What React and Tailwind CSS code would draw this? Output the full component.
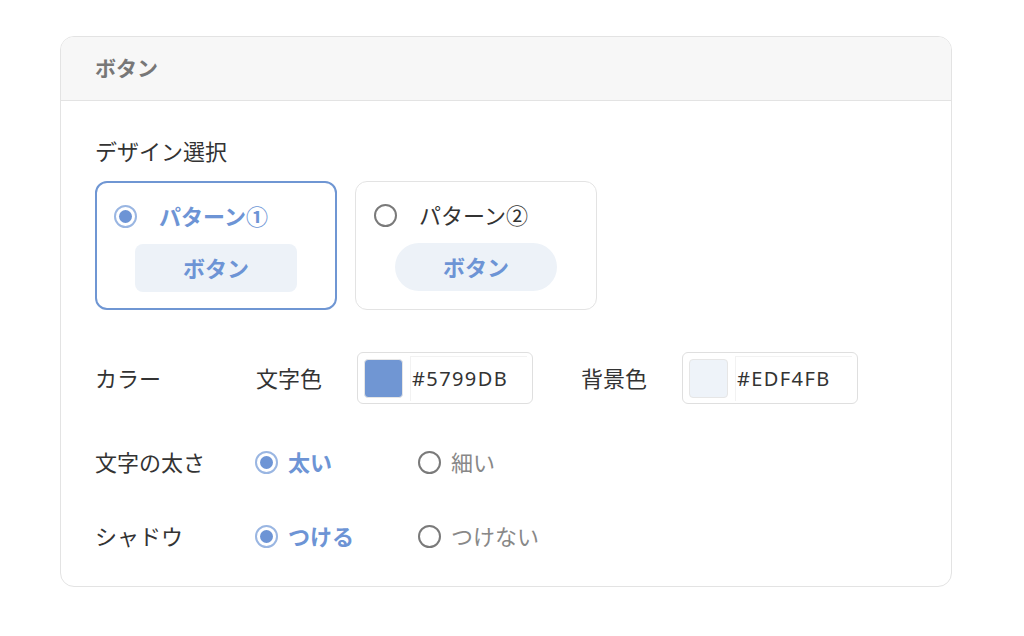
import React, { useState } from 'react';

const font = { fontFamily: '"Noto Sans", "Noto Sans CJK JP", sans-serif' };

function Radio({ checked }) {
  if (checked) {
    return (
      <span className="flex h-[23px] w-[23px] shrink-0 items-center justify-center rounded-full border-2 border-[#9ab6e2] bg-white">
        <span className="h-[13px] w-[13px] rounded-full bg-[#6d94d5]" />
      </span>
    );
  }
  return <span className="h-[23px] w-[23px] shrink-0 rounded-full border-2 border-[#7a7a7a] bg-white" />;
}

function PatternCard({ label, checked, pill, onClick }) {
  return (
    <button
      onClick={onClick}
      className={`flex h-[129px] w-[242px] flex-col rounded-[12px] bg-white pt-[21px] text-left ${
        checked ? 'border-2 border-[#6f96d3] px-[17px]' : 'border border-[#e3e3e3] px-[18px]'
      }`}
    >
      <div className="flex h-[24px] items-center gap-[22px]">
        <Radio checked={checked} />
        <span className={`text-[22px] leading-none ${checked ? 'font-bold text-[#6d94d5]' : 'text-[#333]'}`}>{label}</span>
      </div>
      <div
        className={`mx-auto mt-[16px] flex h-[48px] w-[162px] items-center justify-center bg-[#edf2f8] text-[22px] font-bold text-[#6d94d5] ${
          pill ? 'rounded-full' : 'rounded-[8px]'
        }`}
      >
        ボタン
      </div>
    </button>
  );
}

function ColorInput({ color, value }) {
  return (
    <div className="flex h-[52px] w-[176px] items-center rounded-[6px] border border-[#dfdfdf] bg-white pl-[6px] pr-[5px]">
      <span className="h-[39px] w-[39px] shrink-0 rounded-[4px] border border-[#e6e6e6]" style={{ backgroundColor: color }} />
      <span className="ml-[7px] flex h-[45px] flex-1 items-center border-l border-t border-[#f2f2f2] pl-[1px] text-[20px] tracking-[1.4px] text-[#333]">
        {value}
      </span>
    </div>
  );
}

function OptionRow({ label, options, value, onChange }) {
  return (
    <div className="flex h-[32px] items-center">
      <span className="w-[160px] text-[22px] text-[#333]">{label}</span>
      {options.map((o) => {
        const on = o === value;
        return (
          <button key={o} onClick={() => onChange(o)} className="flex w-[163px] items-center gap-[10px]">
            <Radio checked={on} />
            <span className={`text-[22px] ${on ? 'font-bold text-[#6d94d5]' : 'text-[#888]'}`}>{o}</span>
          </button>
        );
      })}
    </div>
  );
}

export default function App() {
  const [pattern, setPattern] = useState(1);
  const [weight, setWeight] = useState('太い');
  const [shadow, setShadow] = useState('つける');

  return (
    <div className="min-h-[636px] w-full bg-white pl-[60px] pt-[36px]" style={font}>
      <div className="w-[892px] overflow-hidden rounded-[14px] border border-[#e3e3e3] bg-white">
        <div className="flex h-[64px] items-center border-b border-[#e3e3e3] bg-[#f7f7f7] px-[34px]">
          <span className="text-[21px] font-bold text-[#777]">ボタン</span>
        </div>
        <div className="px-[34px] pb-[34px] pt-[36px]">
          <div className="h-[28px] text-[22px] leading-[28px] text-[#333]">デザイン選択</div>
          <div className="mt-[16px] flex gap-[18px]">
            <PatternCard label="パターン①" checked={pattern === 1} onClick={() => setPattern(1)} />
            <PatternCard label="パターン②" checked={pattern === 2} pill onClick={() => setPattern(2)} />
          </div>

          <div className="mt-[42px] flex items-center">
            <span className="w-[161px] text-[22px] text-[#333]">カラー</span>
            <span className="w-[101px] text-[22px] text-[#333]">文字色</span>
            <ColorInput color="#7096d3" value="#5799DB" />
            <span className="ml-[48px] w-[101px] text-[22px] text-[#333]">背景色</span>
            <ColorInput color="#eef3f9" value="#EDF4FB" />
          </div>

          <div className="mt-[42px]">
            <OptionRow label="文字の太さ" options={['太い', '細い']} value={weight} onChange={setWeight} />
          </div>
          <div className="mt-[42px]">
            <OptionRow label="シャドウ" options={['つける', 'つけない']} value={shadow} onChange={setShadow} />
          </div>
        </div>
      </div>
    </div>
  );
}
